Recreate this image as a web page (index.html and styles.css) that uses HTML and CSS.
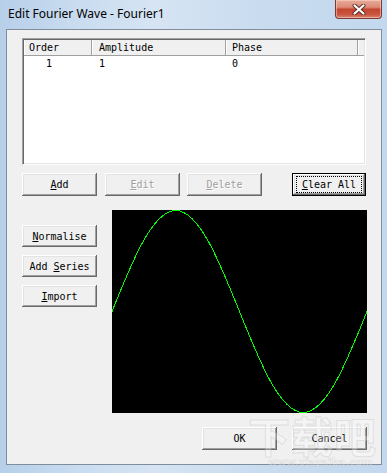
FILE: index.html
```html
<!DOCTYPE html>
<html>
<head>
<meta charset="utf-8">
<title>Edit Fourier Wave - Fourier1</title>
<link rel="stylesheet" href="styles.css">
</head>
<body>
<div class="window">
  <div class="titlebar">
    <span class="title">Edit Fourier Wave - Fourier1</span>
    <div class="close">
      <svg width="14" height="11" viewBox="0 0 14 11">
        <path d="M2.5 1.5 L11.5 9.5 M11.5 1.5 L2.5 9.5" stroke="#5a2a22" stroke-width="4" stroke-linecap="round"/>
        <path d="M2.5 1.5 L11.5 9.5 M11.5 1.5 L2.5 9.5" stroke="#ffffff" stroke-width="2.2" stroke-linecap="round"/>
      </svg>
    </div>
  </div>
  <div class="client">
    <div class="list">
      <div class="list-header">
        <div class="hcell c-order">Order</div>
        <div class="hcell c-amp">Amplitude</div>
        <div class="hcell c-phase">Phase</div>
        <div class="hcell c-fill"></div>
      </div>
      <div class="list-row">
        <div class="cell c-order num">1</div>
        <div class="cell c-amp">1</div>
        <div class="cell c-phase">0</div>
      </div>
    </div>
    <div class="btn-row">
      <button class="btn b-add"><span><u>A</u>dd</span></button>
      <button class="btn b-edit disabled"><span><u>E</u>dit</span></button>
      <button class="btn b-delete disabled"><span><u>D</u>elete</span></button>
      <button class="btn b-clear default"><span class="focus"><u>C</u>lear All</span></button>
    </div>
    <div class="lower">
      <div class="side-btns">
        <button class="btn side"><span><u>N</u>ormalise</span></button>
        <button class="btn side"><span>Add <u>S</u>eries</span></button>
        <button class="btn side"><span><u>I</u>mport</span></button>
      </div>
      <div class="canvas">
        <svg width="255" height="203" viewBox="0 0 255 203">
          <path d="M0 101.5 C20.8 49.7, 40.7 0.5, 63.75 0.5 C86.8 0.5, 106.7 49.7, 127.5 101.5 C148.3 153.3, 168.2 202.5, 191.25 202.5 C214.3 202.5, 234.2 153.3, 255 101.5" fill="none" stroke="#00ff00" stroke-width="1" shape-rendering="crispEdges"/>
        </svg>
      </div>
    </div>
    <div class="dlg-btns">
      <button class="btn dlg"><span>OK</span></button>
      <button class="btn dlg"><span>Cancel</span></button>
    </div>
  </div>
  <div class="watermark" aria-hidden="true">
    <div class="wm-big">下载吧</div>
    <div class="wm-small">www.xiazaiba.com</div>
  </div>
</div>
</body>
</html>
```
FILE: styles.css
```css
html, body {
  margin: 0;
  padding: 0;
}
body {
  width: 387px;
  height: 473px;
  overflow: hidden;
  background: #ffffff;
}
.window {
  position: relative;
  width: 387px;
  height: 473px;
  box-sizing: border-box;
  background: linear-gradient(to right, #b7cfe9 0%, #c9dcf0 20%, #d6e4f3 40%, #c8dbef 70%, #c3d8ee 100%);
  overflow: hidden;
}
.titlebar {
  height: 29px;
  display: flex;
  align-items: flex-start;
}
.title {
  font-family: "Noto Sans", "Open Sans", sans-serif;
  font-size: 12px;
  line-height: 16px;
  padding: 6px 0 0 8px;
  color: #000;
}
.close {
  margin-left: auto;
  margin-right: 5px;
  width: 47px;
  height: 19px;
  box-sizing: border-box;
  border: 1px solid #7a3a31;
  border-top: none;
  border-radius: 0 0 4px 4px;
  background: linear-gradient(#e9ab9b 0%, #dc8a76 40%, #c4452f 52%, #c9553f 80%, #d98572 100%);
  display: flex;
  align-items: center;
  justify-content: center;
  box-shadow: inset 0 0 0 1px rgba(255, 220, 210, 0.5);
}
.close svg {
  display: block;
}
.client {
  margin-left: 6px;
  width: 376px;
  height: 436px;
  box-sizing: border-box;
  border: 1px solid #7f8d9c;
  background: #f0f0f0;
  padding: 8px 0 0 15px;
  font-family: "DejaVu Sans Mono", "Liberation Mono", monospace;
  font-size: 10px;
  color: #000;
}
.list {
  width: 344px;
  height: 127px;
  box-sizing: border-box;
  background: #fff;
  border-top: 1px solid #a0a0a0;
  border-left: 1px solid #a0a0a0;
  border-right: 1px solid #ffffff;
  border-bottom: 1px solid #ffffff;
  box-shadow: inset 1px 1px #696969, inset -1px -1px #e3e3e3;
  padding: 1px;
}
.list-header {
  display: flex;
  height: 16px;
  background: #f0f0f0;
  border-bottom: 1px solid #a0a0a0;
  box-sizing: border-box;
}
.hcell {
  box-sizing: border-box;
  height: 15px;
  line-height: 15px;
  border-right: 1px solid #a0a0a0;
  box-shadow: inset 1px 0 #ffffff;
  white-space: nowrap;
}
.c-order { width: 68px; padding-left: 5px; }
.c-amp { width: 134px; padding-left: 7px; }
.c-phase { width: 132px; padding-left: 6px; }
.c-fill { flex: 1; border-right: none; }
.list-row {
  display: flex;
  height: 16px;
  line-height: 16px;
}
.cell {
  box-sizing: border-box;
}
.cell.num {
  padding-left: 22px;
}
.btn-row {
  display: flex;
  margin-top: 8px;
}
.btn {
  font-family: "DejaVu Sans Mono", "Liberation Mono", monospace;
  font-size: 10px;
  color: #000;
  background: #f0f0f0;
  border: none;
  padding: 0;
  margin: 0;
  width: 75px;
  height: 23px;
  box-shadow: inset -1px -1px #696969, inset 1px 1px #ffffff, inset -2px -2px #a0a0a0, inset 2px 2px #e3e3e3;
  display: flex;
  align-items: center;
  justify-content: center;
  box-sizing: border-box;
  white-space: pre;
}
.btn u {
  text-underline-offset: 1px;
}
.b-edit { margin-left: 8px; }
.b-delete { margin-left: 7px; }
.b-clear {
  margin-left: 30px;
  width: 74px;
  border: 1px solid #000;
}
.focus {
  border: 1px dotted #000;
  padding: 2px 3px;
  width: 66px;
  box-sizing: border-box;
  text-align: center;
  line-height: 11px;
}
.disabled {
  color: #a0a0a0;
  text-shadow: 1px 1px #ffffff;
}
.lower {
  display: flex;
  margin-top: 14px;
  gap: 15px;
}
.side-btns {
  display: flex;
  flex-direction: column;
  gap: 8px;
  padding-top: 15px;
}
.btn.side {
  height: 22px;
}
.canvas {
  width: 255px;
  height: 203px;
  background: #000;
}
.canvas svg {
  display: block;
}
.dlg-btns {
  display: flex;
  gap: 15px;
  margin-top: 14px;
  padding-left: 180px;
}
.watermark {
  position: absolute;
  left: 248px;
  top: 412px;
  width: 135px;
  pointer-events: none;
  color: rgba(255, 255, 255, 0.3);
}
.wm-big {
  font-family: "Noto Sans CJK SC", sans-serif;
  font-size: 42px;
  font-weight: 700;
  line-height: 46px;
  letter-spacing: 1px;
  -webkit-text-stroke: 1px rgba(175, 175, 175, 0.3);
}
.wm-small {
  font-family: "DejaVu Sans", sans-serif;
  font-size: 10px;
  font-weight: 700;
  line-height: 10px;
  padding-left: 20px;
  -webkit-text-stroke: 0.6px rgba(175, 175, 175, 0.35);
}
```
